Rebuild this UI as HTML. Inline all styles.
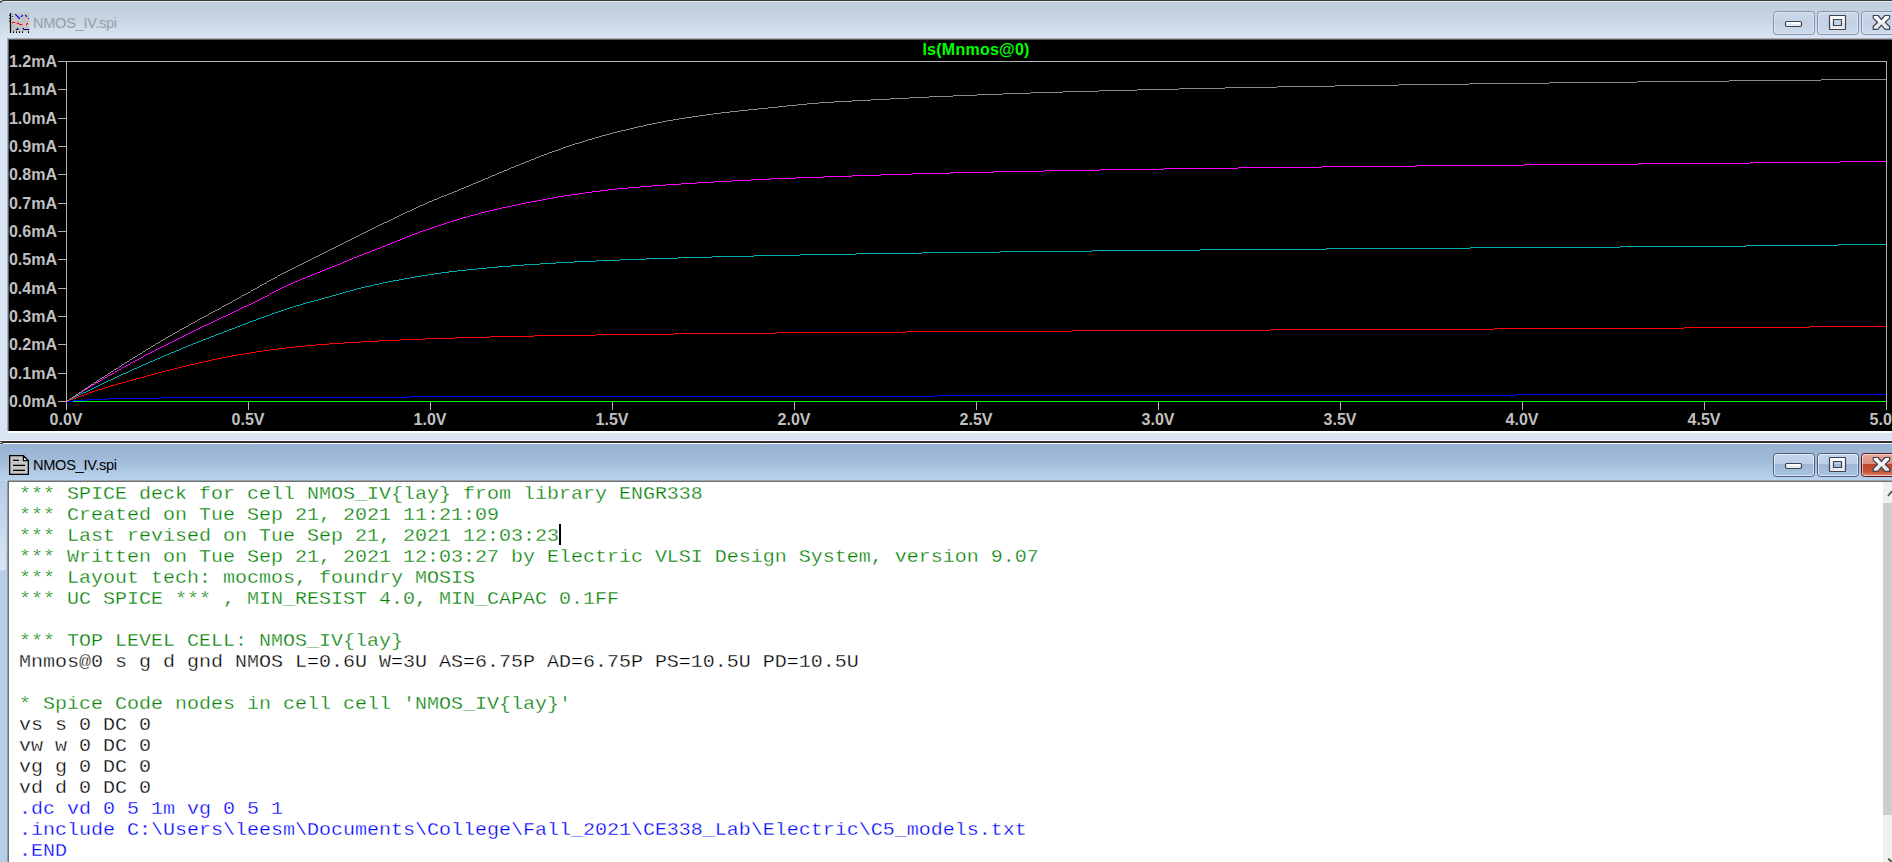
<!DOCTYPE html>
<html><head><meta charset="utf-8"><title>NMOS_IV.spi</title>
<style>
html,body{margin:0;padding:0}
body{width:1892px;height:862px;position:relative;overflow:hidden;background:#d9e5f2;font-family:"Liberation Sans",sans-serif}
.abs{position:absolute}
#w1{position:absolute;left:0;top:0;width:1892px;height:441px;overflow:hidden;background:#d9e5f2}
#w1 .tb{position:absolute;left:0;top:0;width:1892px;height:40px;background:linear-gradient(#bfcddc 0,#c4d2e0 30%,#c9d6e4 55%,#d2dfec 75%,#dae6f3 100%)}
#w1 .topline{position:absolute;left:0;top:0;width:1892px;height:1px;background:#3a3a38}
#w1 .tophl{position:absolute;left:2px;top:1px;width:1892px;height:1px;background:#e4eaf4}
#w1 .bothl{position:absolute;left:0;top:440px;width:1892px;height:1px;background:#eef3fb}
#w1 .blk{position:absolute;left:9px;top:40px;width:1883px;height:391px;background:#000}
#w1 .bl{position:absolute;left:7px;top:38px;width:1885px;height:393px;background:#a9adb3}
#w1 .bl2{position:absolute;left:8px;top:39px;width:1884px;height:392px;background:#5e5e5e}
#w1 .bw{position:absolute;left:8px;top:431px;width:1884px;height:2px;background:#fff}
.plot{position:absolute;left:0;top:0}
.yl,.xl{position:absolute;color:#c0c0c0;font:bold 16px/18px "Liberation Sans",sans-serif;white-space:nowrap}
.yl{left:0;width:57px;text-align:right}
.xl{top:411px;width:80px;text-align:center}
.ttl{position:absolute;left:876px;top:41px;letter-spacing:0.25px;width:200px;text-align:center;color:#00ff00;font:bold 16px/18px "Liberation Sans",sans-serif}
.cap{position:absolute;left:33px;font:14.6px/20px "Liberation Sans",sans-serif;white-space:nowrap;letter-spacing:-0.3px}
#w2{position:absolute;left:0;top:441px;width:1892px;height:421px;overflow:hidden;background:#b7cee8}
#w2 .edge{position:absolute;left:0;top:0;width:1892px;height:2px;background:linear-gradient(#454545,#222)}
#w2 .hl{position:absolute;left:0;top:2px;width:1892px;height:1px;background:#fafcfe}
#w2 .tb{position:absolute;left:0;top:3px;width:1892px;height:37px;background:linear-gradient(#97b2d2 0,#9eb8d7 30%,#a3bcda 50%,#aec7e3 72%,#b9d3ee 100%)}
#w2 .lstrip{position:absolute;left:0;top:40px;width:6px;height:89px;background:linear-gradient(#b4cbe6,#dbe6f3)}
#w2 .ed{position:absolute;left:8px;top:39px;width:1884px;height:382px;background:#6f6f6f}
#w2 .edw{position:absolute;left:9px;top:41px;width:1883px;height:380px;background:#fff}
#w2 .edl{position:absolute;left:7px;top:40px;width:1px;height:381px;background:#8e9aab}
#w2 .edt{position:absolute;left:8px;top:39px;width:1884px;height:1px;background:#9aa3ad}
.txt{position:absolute;left:19px;top:43px;font:17.6px/21px "Liberation Mono",monospace;letter-spacing:0;white-space:pre;-webkit-text-stroke:0.3px #fff;transform:scaleX(1.13636);transform-origin:0 0}
.ln{height:21px}
.g{color:#008000}.k{color:#000}.b{color:#0000ff}
.cur{position:absolute;left:559px;top:83px;width:2px;height:21px;background:#000}
.sb{position:absolute;left:1883px;top:41px;width:9px;height:380px;background:#f0f0f0}
.sbt{position:absolute;left:1883px;top:62px;width:9px;height:312px;background:#cdcdcd}
.btn{position:absolute;width:42px;height:24px;box-sizing:border-box;border-radius:3.500px}
.btn svg{position:absolute;left:-1px;top:-1px}
.btn.ina{border:1px solid #8193b8;background:linear-gradient(#cbd8e6,#c3d2e4 50%,#cddbea);box-shadow:inset 0 0 0 1px rgba(255,255,255,.35)}
.btn.act{border:1px solid #4e6080;background:linear-gradient(#c2d5ec 0,#bcd0e8 45%,#9db6d4 46%,#a9c3e2 100%);box-shadow:inset 0 0 0 1px rgba(255,255,255,.55)}
.btn.act.close{border-color:#5a1420;background:linear-gradient(#e9a99c 0,#dc8d7e 45%,#c2432a 46%,#c8533a 80%,#dd8570 100%)}
</style></head><body>
<div id="w1">
 <div class="tb"></div><svg class="abs" style="left:0;top:0;z-index:3" width="4" height="4" shape-rendering="crispEdges"><rect x="0" y="0" width="2" height="1" fill="#d5d1ba"/><rect x="0" y="1" width="2" height="1" fill="#3a3a38"/><rect x="2" y="1" width="1" height="1" fill="#7d838c"/><rect x="0" y="2" width="1" height="1" fill="#55595f"/></svg><div class="topline"></div><div class="tophl"></div><div class="bothl"></div>
 <div class="bl"></div><div class="bl2"></div><div class="bw"></div><div class="blk"></div>
 <svg class="abs" style="left:4px;top:8px" width="32" height="30" viewBox="4 8 32 30">
  <rect x="11" y="13" width="18.200" height="18.300" fill="#c3c3c3"/>
  <path d="M10.500 13v20" stroke="#000" stroke-width="1.200"/>
  <path d="M9 15.400h1.500M9 18.400h1.500M9 21.400h1.500" stroke="#000" stroke-width="0.900"/>
  <path d="M13.500 31.300v1.700M16.500 31.300v1.700M19.500 31.300v1.700M22.500 31.300v1.700M28.500 31.300v1.700" stroke="#000" stroke-width="1.100"/>
  <path d="M12.500 16.500h.01M15.500 14.400l4 4.100M21.400 16.500l1.100-1.100M25.500 15.400l1.100 1.100M28.500 18.500h.01" stroke="#0000ff" stroke-width="1.150" stroke-linecap="round" fill="none"/>
  <path d="M12.400 22.500h2.400M17.300 23.400h1.500M19.500 24.500h2.300M26.400 24.500l1.100-1.100" stroke="#ff0000" stroke-width="1.100" stroke-linecap="round" fill="none"/>
  <path d="M16.300 29.500h1.500v-1.300M23.200 28.300l.5 1.200h5.200" stroke="#000080" stroke-width="1.150" stroke-linecap="round" stroke-linejoin="round" fill="none"/>
 </svg>
 <div class="cap" style="top:13px;color:#9aa0a8">NMOS_IV.spi</div>
 <div class="btn ina" style="left:1773px;top:11px"><svg width="42" height="24"><defs><linearGradient id="gi" x1="0" y1="0" x2="0" y2="1"><stop offset="0" stop-color="#fff"/><stop offset="0.5" stop-color="#fbfbfb"/><stop offset="0.55" stop-color="#e6e6e6"/><stop offset="1" stop-color="#efefef"/></linearGradient></defs><rect x="12.500" y="10.500" width="16" height="5" rx="1.200" fill="url(#gi)" stroke="#3e4258" stroke-width="1.2"/></svg></div>
<div class="btn ina" style="left:1817px;top:11px"><svg width="42" height="24"><path d="M13.200 4.500h14.600a.7.7 0 0 1 .7.7v12.600a.7.7 0 0 1-.7.7h-14.600a.7.7 0 0 1-.7-.7v-12.600a.7.7 0 0 1 .7-.7zM16.500 8.500v6h8v-6z" fill="url(#gi)" fill-rule="evenodd" stroke="#3e4258" stroke-width="1.2"/></svg></div>
<div class="btn ina close" style="left:1861px;top:11px"><svg width="42" height="24"><path d="M12.200 4.500H17.100L20.400 8.500L23.900 4.500H28.600V7.100L24.200 11.300L28.600 15.500V18.400H24.100L20.400 14.200L16.800 18.400H12.200V15.500L16.600 11.300L12.200 7.100Z" fill="url(#gi)" stroke="#3e4258" stroke-width="1.2" stroke-linejoin="round"/></svg></div>
 <svg class="plot" width="1892" height="432" viewBox="0 0 1892 432" shape-rendering="crispEdges">
<path d="M66.5 61V410M1886.5 61V410M58 61.5H1887M58 401.5H66M58 373.5H66M58 344.5H66M58 316.5H66M58 288.5H66M58 259.5H66M58 231.5H66M58 203.5H66M58 174.5H66M58 146.5H66M58 118.5H66M58 89.5H66M248.5 402V410M430.5 402V410M612.5 402V410M794.5 402V410M976.5 402V410M1158.5 402V410M1340.5 402V410M1522.5 402V410M1704.5 402V410" stroke="#b4b4b4" stroke-width="1" fill="none"/>
<path d="M67 401.5H1886" stroke="#00ff00" stroke-width="1" fill="none"/>
<path d="M67 401.5H73M73 400.5H87M87 399.5H109M109 398.5H161M161 397.5H410M410 396.5H937M937 395.5H1515M1515 394.5H1886" stroke="#0000ff" stroke-width="1" fill="none"/>
<path d="M67 401.5H68M68 400.5H70M70 399.5H73M73 398.5H76M76 397.5H78M78 396.5H81M81 395.5H84M84 394.5H87M87 393.5H89M89 392.5H92M92 391.5H95M95 390.5H98M98 389.5H102M102 388.5H105M105 387.5H108M108 386.5H111M111 385.5H115M115 384.5H118M118 383.5H122M122 382.5H126M126 381.5H129M129 380.5H133M133 379.5H136M136 378.5H140M140 377.5H144M144 376.5H147M147 375.5H151M151 374.5H155M155 373.5H158M158 372.5H162M162 371.5H166M166 370.5H170M170 369.5H174M174 368.5H178M178 367.5H182M182 366.5H186M186 365.5H190M190 364.5H195M195 363.5H199M199 362.5H203M203 361.5H208M208 360.5H212M212 359.5H217M217 358.5H222M222 357.5H227M227 356.5H232M232 355.5H238M238 354.5H244M244 353.5H250M250 352.5H256M256 351.5H263M263 350.5H270M270 349.5H278M278 348.5H286M286 347.5H295M295 346.5H305M305 345.5H316M316 344.5H329M329 343.5H344M344 342.5H361M361 341.5H379M379 340.5H400M400 339.5H425M425 338.5H455M455 337.5H490M490 336.5H534M534 335.5H596M596 334.5H674M674 333.5H776M776 332.5H906M906 331.5H1072M1072 330.5H1270M1270 329.5H1494M1494 328.5H1684M1684 327.5H1810M1810 326.5H1886" stroke="#ff0000" stroke-width="1" fill="none"/>
<path d="M67 400.5H69M69 399.5H71M71 398.5H73M73 397.5H75M75 396.5H77M77 395.5H79M79 394.5H81M81 393.5H83M83 392.5H86M86 391.5H88M88 390.5H90M90 389.5H92M92 388.5H94M94 387.5H96M96 386.5H98M98 385.5H100M100 384.5H102M102 383.5H104M104 382.5H106M106 381.5H108M108 380.5H111M111 379.5H113M113 378.5H115M115 377.5H117M117 376.5H119M119 375.5H121M121 374.5H123M123 373.5H126M126 372.5H128M128 371.5H130M130 370.5H132M132 369.5H134M134 368.5H137M137 367.5H139M139 366.5H141M141 365.5H143M143 364.5H146M146 363.5H148M148 362.5H150M150 361.5H153M153 360.5H155M155 359.5H157M157 358.5H160M160 357.5H162M162 356.5H164M164 355.5H167M167 354.5H169M169 353.5H171M171 352.5H174M174 351.5H176M176 350.5H179M179 349.5H181M181 348.5H183M183 347.5H186M186 346.5H188M188 345.5H191M191 344.5H193M193 343.5H196M196 342.5H198M198 341.5H201M201 340.5H203M203 339.5H206M206 338.5H209M209 337.5H211M211 336.5H214M214 335.5H216M216 334.5H219M219 333.5H222M222 332.5H224M224 331.5H227M227 330.5H229M229 329.5H232M232 328.5H235M235 327.5H237M237 326.5H240M240 325.5H242M242 324.5H245M245 323.5H248M248 322.5H250M250 321.5H253M253 320.5H256M256 319.5H258M258 318.5H261M261 317.5H264M264 316.5H267M267 315.5H270M270 314.5H272M272 313.5H275M275 312.5H278M278 311.5H281M281 310.5H284M284 309.5H287M287 308.5H290M290 307.5H293M293 306.5H296M296 305.5H300M300 304.5H303M303 303.5H306M306 302.5H310M310 301.5H314M314 300.5H318M318 299.5H321M321 298.5H325M325 297.5H329M329 296.5H332M332 295.5H336M336 294.5H339M339 293.5H343M343 292.5H346M346 291.5H350M350 290.5H354M354 289.5H357M357 288.5H361M361 287.5H365M365 286.5H370M370 285.5H374M374 284.5H379M379 283.5H383M383 282.5H388M388 281.5H393M393 280.5H399M399 279.5H404M404 278.5H410M410 277.5H415M415 276.5H421M421 275.5H428M428 274.5H434M434 273.5H441M441 272.5H449M449 271.5H457M457 270.5H467M467 269.5H477M477 268.5H487M487 267.5H498M498 266.5H511M511 265.5H524M524 264.5H540M540 263.5H556M556 262.5H574M574 261.5H596M596 260.5H620M620 259.5H646M646 258.5H678M678 257.5H712M712 256.5H754M754 255.5H800M800 254.5H856M856 253.5H922M922 252.5H1000M1000 251.5H1092M1092 250.5H1200M1200 249.5H1326M1326 248.5H1470M1470 247.5H1620M1620 246.5H1746M1746 245.5H1838M1838 244.5H1886" stroke="#00b0b0" stroke-width="1" fill="none"/>
<path d="M67 400.5H69M69 399.5H70M70 398.5H72M72 397.5H74M74 396.5H75M75 395.5H77M77 394.5H78M78 393.5H80M80 392.5H82M82 391.5H83M83 390.5H85M85 389.5H87M87 388.5H88M88 387.5H90M90 386.5H91M91 385.5H93M93 384.5H95M95 383.5H96M96 382.5H98M98 381.5H100M100 380.5H102M102 379.5H103M103 378.5H105M105 377.5H107M107 376.5H108M108 375.5H110M110 374.5H112M112 373.5H114M114 372.5H115M115 371.5H117M117 370.5H119M119 369.5H121M121 368.5H122M122 367.5H124M124 366.5H126M126 365.5H128M128 364.5H130M130 363.5H131M131 362.5H133M133 361.5H135M135 360.5H137M137 359.5H139M139 358.5H141M141 357.5H143M143 356.5H144M144 355.5H146M146 354.5H148M148 353.5H150M150 352.5H152M152 351.5H154M154 350.5H156M156 349.5H158M158 348.5H160M160 347.5H162M162 346.5H164M164 345.5H166M166 344.5H168M168 343.5H170M170 342.5H172M172 341.5H174M174 340.5H176M176 339.5H178M178 338.5H180M180 337.5H182M182 336.5H184M184 335.5H186M186 334.5H188M188 333.5H190M190 332.5H192M192 331.5H194M194 330.5H196M196 329.5H198M198 328.5H200M200 327.5H202M202 326.5H204M204 325.5H207M207 324.5H209M209 323.5H211M211 322.5H213M213 321.5H215M215 320.5H217M217 319.5H219M219 318.5H221M221 317.5H223M223 316.5H226M226 315.5H228M228 314.5H230M230 313.5H232M232 312.5H234M234 311.5H236M236 310.5H238M238 309.5H240M240 308.5H242M242 307.5H244M244 306.5H247M247 305.5H249M249 304.5H251M251 303.5H253M253 302.5H255M255 301.5H257M257 300.5H259M259 299.5H261M261 298.5H263M263 297.5H265M265 296.5H267M267 295.5H269M269 294.5H270M270 293.5H272M272 292.5H274M274 291.5H276M276 290.5H278M278 289.5H280M280 288.5H282M282 287.5H284M284 286.5H286M286 285.5H288M288 284.5H291M291 283.5H293M293 282.5H295M295 281.5H298M298 280.5H300M300 279.5H302M302 278.5H305M305 277.5H307M307 276.5H310M310 275.5H312M312 274.5H315M315 273.5H317M317 272.5H320M320 271.5H322M322 270.5H325M325 269.5H327M327 268.5H330M330 267.5H332M332 266.5H335M335 265.5H337M337 264.5H340M340 263.5H342M342 262.5H344M344 261.5H347M347 260.5H349M349 259.5H352M352 258.5H354M354 257.5H357M357 256.5H359M359 255.5H362M362 254.5H364M364 253.5H367M367 252.5H370M370 251.5H372M372 250.5H375M375 249.5H377M377 248.5H380M380 247.5H382M382 246.5H385M385 245.5H387M387 244.5H390M390 243.5H392M392 242.5H395M395 241.5H397M397 240.5H400M400 239.5H402M402 238.5H405M405 237.5H407M407 236.5H410M410 235.5H412M412 234.5H415M415 233.5H418M418 232.5H420M420 231.5H423M423 230.5H426M426 229.5H429M429 228.5H432M432 227.5H435M435 226.5H438M438 225.5H441M441 224.5H444M444 223.5H447M447 222.5H450M450 221.5H453M453 220.5H457M457 219.5H460M460 218.5H463M463 217.5H467M467 216.5H470M470 215.5H474M474 214.5H478M478 213.5H481M481 212.5H485M485 211.5H489M489 210.5H494M494 209.5H498M498 208.5H502M502 207.5H507M507 206.5H512M512 205.5H517M517 204.5H521M521 203.5H526M526 202.5H531M531 201.5H537M537 200.5H542M542 199.5H547M547 198.5H553M553 197.5H558M558 196.5H564M564 195.5H571M571 194.5H578M578 193.5H585M585 192.5H592M592 191.5H600M600 190.5H608M608 189.5H617M617 188.5H628M628 187.5H640M640 186.5H652M652 185.5H666M666 184.5H681M681 183.5H697M697 182.5H714M714 181.5H732M732 180.5H751M751 179.5H771M771 178.5H796M796 177.5H824M824 176.5H852M852 175.5H881M881 174.5H912M912 173.5H950M950 172.5H994M994 171.5H1044M1044 170.5H1100M1100 169.5H1164M1164 168.5H1238M1238 167.5H1322M1322 166.5H1416M1416 165.5H1524M1524 164.5H1638M1638 163.5H1750M1750 162.5H1840M1840 161.5H1886" stroke="#ff00ff" stroke-width="1" fill="none"/>
<path d="M67 400.5H69M69 399.5H70M70 398.5H72M72 397.5H73M73 396.5H75M75 395.5H76M76 394.5H78M78 393.5H79M79 392.5H81M81 391.5H82M82 390.5H84M84 389.5H85M85 388.5H87M87 387.5H88M88 386.5H90M90 385.5H91M91 384.5H93M93 383.5H94M94 382.5H96M96 381.5H97M97 380.5H99M99 379.5H100M100 378.5H102M102 377.5H104M104 376.5H105M105 375.5H107M107 374.5H108M108 373.5H110M110 372.5H111M111 371.5H113M113 370.5H114M114 369.5H116M116 368.5H118M118 367.5H119M119 366.5H121M121 365.5H122M122 364.5H124M124 363.5H125M125 362.5H127M127 361.5H129M129 360.5H130M130 359.5H132M132 358.5H133M133 357.5H135M135 356.5H137M137 355.5H138M138 354.5H140M140 353.5H142M142 352.5H143M143 351.5H145M145 350.5H146M146 349.5H148M148 348.5H150M150 347.5H151M151 346.5H153M153 345.5H155M155 344.5H156M156 343.5H158M158 342.5H160M160 341.5H161M161 340.5H163M163 339.5H165M165 338.5H166M166 337.5H168M168 336.5H170M170 335.5H172M172 334.5H173M173 333.5H175M175 332.5H177M177 331.5H179M179 330.5H180M180 329.5H182M182 328.5H184M184 327.5H186M186 326.5H188M188 325.5H189M189 324.5H191M191 323.5H193M193 322.5H195M195 321.5H197M197 320.5H198M198 319.5H200M200 318.5H202M202 317.5H204M204 316.5H206M206 315.5H208M208 314.5H209M209 313.5H211M211 312.5H213M213 311.5H215M215 310.5H217M217 309.5H219M219 308.5H221M221 307.5H222M222 306.5H224M224 305.5H226M226 304.5H228M228 303.5H230M230 302.5H232M232 301.5H233M233 300.5H235M235 299.5H237M237 298.5H239M239 297.5H241M241 296.5H242M242 295.5H244M244 294.5H246M246 293.5H248M248 292.5H250M250 291.5H251M251 290.5H253M253 289.5H255M255 288.5H257M257 287.5H259M259 286.5H260M260 285.5H262M262 284.5H264M264 283.5H266M266 282.5H267M267 281.5H269M269 280.5H271M271 279.5H273M273 278.5H275M275 277.5H277M277 276.5H278M278 275.5H280M280 274.5H282M282 273.5H284M284 272.5H286M286 271.5H288M288 270.5H290M290 269.5H292M292 268.5H294M294 267.5H296M296 266.5H298M298 265.5H300M300 264.5H302M302 263.5H304M304 262.5H306M306 261.5H308M308 260.5H310M310 259.5H312M312 258.5H314M314 257.5H316M316 256.5H318M318 255.5H320M320 254.5H322M322 253.5H324M324 252.5H326M326 251.5H328M328 250.5H330M330 249.5H332M332 248.5H334M334 247.5H336M336 246.5H338M338 245.5H340M340 244.5H342M342 243.5H344M344 242.5H346M346 241.5H348M348 240.5H350M350 239.5H352M352 238.5H354M354 237.5H356M356 236.5H358M358 235.5H360M360 234.5H362M362 233.5H364M364 232.5H366M366 231.5H368M368 230.5H370M370 229.5H372M372 228.5H374M374 227.5H376M376 226.5H378M378 225.5H380M380 224.5H382M382 223.5H384M384 222.5H387M387 221.5H389M389 220.5H391M391 219.5H393M393 218.5H395M395 217.5H397M397 216.5H399M399 215.5H401M401 214.5H403M403 213.5H405M405 212.5H407M407 211.5H410M410 210.5H412M412 209.5H414M414 208.5H416M416 207.5H418M418 206.5H420M420 205.5H423M423 204.5H425M425 203.5H427M427 202.5H429M429 201.5H432M432 200.5H434M434 199.5H437M437 198.5H439M439 197.5H441M441 196.5H444M444 195.5H447M447 194.5H449M449 193.5H452M452 192.5H454M454 191.5H457M457 190.5H459M459 189.5H461M461 188.5H464M464 187.5H466M466 186.5H469M469 185.5H471M471 184.5H473M473 183.5H476M476 182.5H478M478 181.5H481M481 180.5H483M483 179.5H485M485 178.5H488M488 177.5H490M490 176.5H492M492 175.5H495M495 174.5H497M497 173.5H499M499 172.5H502M502 171.5H504M504 170.5H507M507 169.5H509M509 168.5H511M511 167.5H514M514 166.5H516M516 165.5H519M519 164.5H521M521 163.5H524M524 162.5H526M526 161.5H529M529 160.5H531M531 159.5H534M534 158.5H536M536 157.5H539M539 156.5H541M541 155.5H544M544 154.5H547M547 153.5H549M549 152.5H552M552 151.5H555M555 150.5H558M558 149.5H561M561 148.5H563M563 147.5H566M566 146.5H569M569 145.5H572M572 144.5H575M575 143.5H579M579 142.5H582M582 141.5H585M585 140.5H588M588 139.5H592M592 138.5H595M595 137.5H599M599 136.5H602M602 135.5H606M606 134.5H610M610 133.5H613M613 132.5H617M617 131.5H621M621 130.5H626M626 129.5H630M630 128.5H634M634 127.5H638M638 126.5H643M643 125.5H647M647 124.5H652M652 123.5H657M657 122.5H662M662 121.5H667M667 120.5H673M673 119.5H679M679 118.5H685M685 117.5H692M692 116.5H699M699 115.5H706M706 114.5H713M713 113.5H721M721 112.5H730M730 111.5H739M739 110.5H748M748 109.5H758M758 108.5H768M768 107.5H778M778 106.5H787M787 105.5H797M797 104.5H807M807 103.5H819M819 102.5H834M834 101.5H852M852 100.5H871M871 99.5H890M890 98.5H909M909 97.5H929M929 96.5H953M953 95.5H977M977 94.5H1003M1003 93.5H1031M1031 92.5H1063M1063 91.5H1099M1099 90.5H1137M1137 89.5H1179M1179 88.5H1225M1225 87.5H1277M1277 86.5H1335M1335 85.5H1399M1399 84.5H1469M1469 83.5H1549M1549 82.5H1637M1637 81.5H1729M1729 80.5H1821M1821 79.5H1886" stroke="#8c8c8c" stroke-width="1" fill="none"/>
</svg>
 <div class="yl" style="top:393px">0.0mA</div>
<div class="yl" style="top:365px">0.1mA</div>
<div class="yl" style="top:336px">0.2mA</div>
<div class="yl" style="top:308px">0.3mA</div>
<div class="yl" style="top:280px">0.4mA</div>
<div class="yl" style="top:251px">0.5mA</div>
<div class="yl" style="top:223px">0.6mA</div>
<div class="yl" style="top:195px">0.7mA</div>
<div class="yl" style="top:166px">0.8mA</div>
<div class="yl" style="top:138px">0.9mA</div>
<div class="yl" style="top:110px">1.0mA</div>
<div class="yl" style="top:81px">1.1mA</div>
<div class="yl" style="top:53px">1.2mA</div>
<div class="xl" style="left:26px">0.0V</div>
<div class="xl" style="left:208px">0.5V</div>
<div class="xl" style="left:390px">1.0V</div>
<div class="xl" style="left:572px">1.5V</div>
<div class="xl" style="left:754px">2.0V</div>
<div class="xl" style="left:936px">2.5V</div>
<div class="xl" style="left:1118px">3.0V</div>
<div class="xl" style="left:1300px">3.5V</div>
<div class="xl" style="left:1482px">4.0V</div>
<div class="xl" style="left:1664px">4.5V</div>
<div class="xl" style="left:1846px">5.0V</div>
 <div class="ttl">Is(Mnmos@0)</div>
</div>
<div id="w2">
 <div class="tb"></div><div class="edge"></div><div class="hl"></div>
 <div class="lstrip"></div>
 <div class="edl"></div><div class="ed"></div><div class="edt"></div><div class="edw"></div>
 <svg class="abs" style="left:9px;top:14px" width="20" height="20" viewBox="0 0 20 20">
  <path d="M0.650 0.650h13.700l5 5v13.700h-18.700z" fill="#c6c6c6" stroke="#000" stroke-width="1.300"/>
  <path d="M14.400 0.800v4.900h4.900z" fill="#f2f2f2" stroke="#000" stroke-width="1.200" stroke-linejoin="round"/>
  <path d="M4 5.300h6M4 10.300h12M4 15.300h12" stroke="#000" stroke-width="1.300"/>
 </svg>
 <div class="cap" style="top:14px;color:#000">NMOS_IV.spi</div>
 <div class="btn act" style="left:1773px;top:12px"><svg width="42" height="24"><defs><linearGradient id="ga" x1="0" y1="0" x2="0" y2="1"><stop offset="0" stop-color="#fff"/><stop offset="0.5" stop-color="#fbfbfb"/><stop offset="0.55" stop-color="#e6e6e6"/><stop offset="1" stop-color="#efefef"/></linearGradient></defs><rect x="12.500" y="10.500" width="16" height="5" rx="1.200" fill="url(#ga)" stroke="#3e4258" stroke-width="1.2"/></svg></div>
<div class="btn act" style="left:1817px;top:12px"><svg width="42" height="24"><path d="M13.200 4.500h14.600a.7.7 0 0 1 .7.7v12.600a.7.7 0 0 1-.7.7h-14.600a.7.7 0 0 1-.7-.7v-12.600a.7.7 0 0 1 .7-.7zM16.500 8.500v6h8v-6z" fill="url(#ga)" fill-rule="evenodd" stroke="#3e4258" stroke-width="1.2"/></svg></div>
<div class="btn act close" style="left:1861px;top:12px"><svg width="42" height="24"><path d="M12.200 4.500H17.100L20.400 8.500L23.900 4.500H28.600V7.100L24.200 11.300L28.600 15.500V18.400H24.100L20.400 14.200L16.800 18.400H12.200V15.500L16.600 11.300L12.200 7.100Z" fill="url(#ga)" stroke="#3e4258" stroke-width="1.2" stroke-linejoin="round"/></svg></div>
 <div class="txt"><div class="ln g">*** SPICE deck for cell NMOS_IV{lay} from library ENGR338</div><div class="ln g">*** Created on Tue Sep 21, 2021 11:21:09</div><div class="ln g">*** Last revised on Tue Sep 21, 2021 12:03:23</div><div class="ln g">*** Written on Tue Sep 21, 2021 12:03:27 by Electric VLSI Design System, version 9.07</div><div class="ln g">*** Layout tech: mocmos, foundry MOSIS</div><div class="ln g">*** UC SPICE *** , MIN_RESIST 4.0, MIN_CAPAC 0.1FF</div><div class="ln g">&nbsp;</div><div class="ln g">*** TOP LEVEL CELL: NMOS_IV{lay}</div><div class="ln k">Mnmos@0 s g d gnd NMOS L=0.6U W=3U AS=6.75P AD=6.75P PS=10.5U PD=10.5U</div><div class="ln k">&nbsp;</div><div class="ln g">* Spice Code nodes in cell cell 'NMOS_IV{lay}'</div><div class="ln k">vs s 0 DC 0</div><div class="ln k">vw w 0 DC 0</div><div class="ln k">vg g 0 DC 0</div><div class="ln k">vd d 0 DC 0</div><div class="ln b">.dc vd 0 5 1m vg 0 5 1</div><div class="ln b">.include C:\Users\leesm\Documents\College\Fall_2021\CE338_Lab\Electric\C5_models.txt</div><div class="ln b">.END</div></div>
 <div class="cur"></div>
 <div class="sb"></div><div class="sbt"></div>
 <svg class="abs" style="left:1883px;top:41px" width="9" height="21"><path d="M5 14l4-5" stroke="#555" stroke-width="1.800" fill="none"/></svg>
 <svg class="abs" style="left:1883px;top:411px" width="9" height="10"><path d="M5.300 6.500l4 4.300" stroke="#555" stroke-width="2" fill="none"/></svg>
 <svg class="abs" style="left:0;top:0" width="4" height="5" shape-rendering="crispEdges"><rect x="0" y="1" width="2" height="1" fill="#d5d1ba"/><rect x="0" y="2" width="2" height="1" fill="#3a3a38"/><rect x="0" y="3" width="1" height="1" fill="#e8eef6"/><rect x="2" y="2" width="1" height="1" fill="#6a6f78"/></svg>
</div>
</body></html>
